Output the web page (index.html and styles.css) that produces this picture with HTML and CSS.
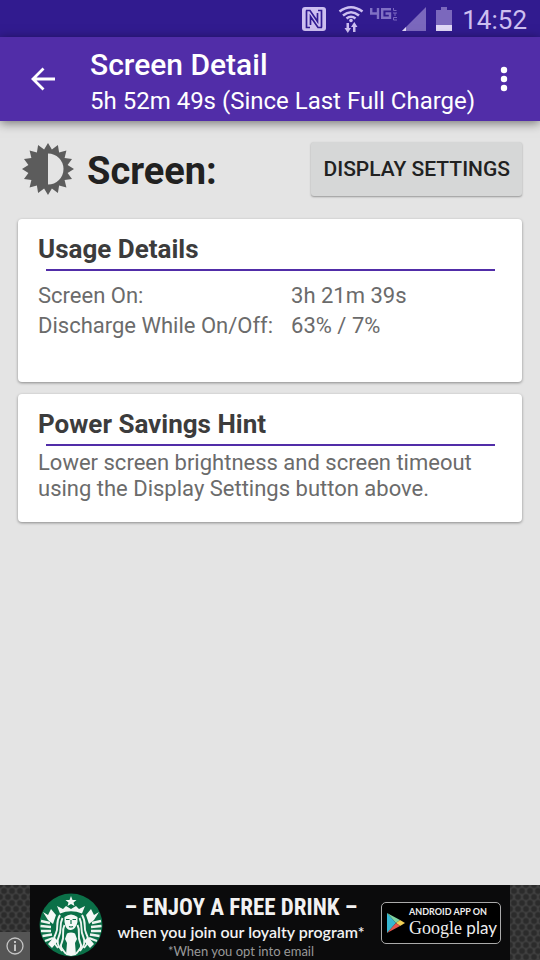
FILE: index.html
```html
<!DOCTYPE html>
<html lang="en">
<head>
<meta charset="utf-8">
<meta name="viewport" content="width=device-width, initial-scale=1">
<title>Screen Detail</title>
<link rel="stylesheet" href="styles.css">
</head>
<body>
<div class="status">
  <svg width="24" height="24" viewBox="0 0 24 24" aria-label="NFC"><rect width="24" height="24" rx="3" fill="#cdbff0"/><path d="M4 3.500H8L15.500 14.500V6M20 20.500H16L8.500 9.500V18M4.500 3.500V20.500H8M19.500 20.500V3.500H16" fill="none" stroke="#311b92" stroke-width="1.700"/></svg>
  <svg class="wifi" width="26" height="28" viewBox="0 0 26 28" aria-label="Wi-Fi"><g fill="none" stroke="#cdbff0" stroke-width="2.600"><path d="M1.500 6.500Q13-2 24.500 6.500M5 10.500Q13 4 21 10.500M8.500 13.500Q13 10 17.500 13.500"/></g><circle cx="13" cy="15.500" r="1.800" fill="#cdbff0"/><path d="M8.500 18h2.500v5h2l-3.200 5-3.300-5h2zM15 27h2.500v-5h2l-3.200-5-3.300 5h2z" fill="#cdbff0"/></svg>
  <svg class="lte" width="28" height="14" viewBox="0 0 28 14" aria-label="4G LTE"><path d="M1.200 1V6.500H9M8 1V12M21 2.200H12.200V10.800H20V6.500H15.500" fill="none" stroke="#8070c4" stroke-width="2.400"/><path d="M23.500 1v2.500h3M23 6h4M25 6v3M27 10.500h-3.500v2.500h3.500" fill="none" stroke="#7a66c0"/></svg>
  <svg width="24" height="24" viewBox="0 0 24 24" aria-label="Signal"><path d="M24 0V24H0Z" fill="#7b68bd"/><path d="M4 20V24H0Z" fill="#e0d8f5"/></svg>
  <svg class="battery" width="16" height="24" viewBox="0 0 16 24" aria-label="Battery"><path d="M5 0h6v3h5v21H0V3h5z" fill="#7b68bd"/><path d="M0 18h16v6H0z" fill="#e0d8f5"/></svg>
  <time>14:52</time>
</div>
<header class="bar">
  <button class="icon-button" type="button" aria-label="Back"><svg width="26" height="24" viewBox="0 0 26 24"><path d="M25 12H3M13.500 1.500 3 12 13.500 22.500" fill="none" stroke="#fff" stroke-width="2.800"/></svg></button>
  <div class="titles"><h1>Screen Detail</h1><p>5h 52m 49s (Since Last Full Charge)</p></div>
  <button class="icon-button" type="button" aria-label="More options"><svg width="8" height="26" viewBox="0 0 8 26" fill="#fff"><circle cx="4" cy="4" r="3.200"/><circle cx="4" cy="13" r="3.200"/><circle cx="4" cy="22" r="3.200"/></svg></button>
</header>
<main>
  <div class="heading">
    <svg width="52" height="52" viewBox="-26 -26 52 52" aria-hidden="true"><path fill="#5c5c5c" d="M0-26 3.900-19.600 9.900-24 11.100-16.600 18.400-18.400 16.600-11.100 24-9.900 19.600-3.900 26 0 19.600 3.900 24 9.900 16.600 11.100 18.400 18.400 11.100 16.600 9.900 24 3.900 19.600 0 26-3.900 19.600-9.900 24-11.100 16.600-18.400 18.400-16.600 11.100-24 9.900-19.600 3.900-26 0-19.600-3.900-24-9.900-16.600-11.100-18.400-18.400-11.100-16.600-9.900-24-3.900-19.600Z"/><path fill="#e4e4e4" d="M0-15.500A15.500 15.500 0 0 1 0 15.500Z"/></svg>
    <h2>Screen:</h2>
    <button class="settings" type="button">DISPLAY SETTINGS</button>
  </div>
  <section class="card usage">
    <h3>Usage Details</h3>
    <dl><dt>Screen On:</dt><dd>3h 21m 39s</dd><dt>Discharge While On/Off:</dt><dd>63% / 7%</dd></dl>
  </section>
  <section class="card hint">
    <h3>Power Savings Hint</h3>
    <p>Lower screen brightness and screen timeout using the Display Settings button above.</p>
  </section>
</main>
<footer class="ad">
  <div class="edge"><span class="info"><svg width="18" height="18" viewBox="0 0 18 18" aria-label="Ad information"><circle cx="9" cy="9" r="8" fill="none" stroke="#c4c4c4" stroke-width="1.300"/><path d="M9 7.500V14M9 4v2" stroke="#c4c4c4" stroke-width="2"/></svg></span></div>
  <div class="banner">
    <svg class="siren" width="64" height="64" viewBox="0 0 64 64" aria-label="Starbucks"><circle cx="32" cy="32" r="31.500" fill="#0b7048"/>
      <g fill="none" stroke="#eef5f0" stroke-width="1.900"><path d="M21 22C16 30 20 34 17 40S14 49 19 55M23.500 25C20 32 23 37 20 43S19 53 23 58M25.500 32C22 39 26 43 23 49S24 56 27 61M43 22C48 30 44 34 47 40S50 49 45 55M40.500 25C44 32 41 37 44 43S45 53 41 58M38.500 32C42 39 38 43 41 49S40 56 37 61"/><path d="M2 28 11 30M1.500 33 12 34M2 38 12 38M3.500 43 13 41.500M6 48 14 45M62 28 53 30M62.500 33 52 34M62 38 52 38M60.500 43 51 41.500M58 48 50 45" stroke-width="2.400"/></g>
      <path fill="#f5f8f6" d="M32 3 33.500 7 37.500 7 34.500 9.500 35.500 13 32 11 28.500 13 29.500 9.500 26.500 7 30.500 7ZM18 13 24 16 27 13 32 16 37 13 40 16 46 13 43 20.500Q32 16 21 20.500ZM25.500 24Q32 19 38.500 24V29Q37 36 32 37T25.500 29ZM4 19 9 22 12 16 17 22 14 31 9 27ZM60 19 55 22 52 16 47 22 50 31 55 27ZM28 40.500Q32 38.500 36 40.500L38 46 36 50 37 62 32 63 27 62 28 50 26 46ZM9 51 15 44 19 48 13 55ZM55 51 49 44 45 48 51 55Z"/>
      <path d="M27 26.500h3.500M33.500 26.500H37M32 27v4M30 33.500q2 1 4 0" fill="none" stroke="#0b7048" stroke-width="1.200"/>
    </svg>
    <div class="copy"><strong>– ENJOY A FREE DRINK –</strong><span>when you join our loyalty program*</span><small>*When you opt into email</small></div>
    <a class="store" href="#"><svg width="18" height="20" viewBox="0 0 18 20" aria-hidden="true"><path d="M0 0V20L9 10Z" fill="#36b7d2"/><path d="M0 0 13 7 9 10Z" fill="#7fd3a0"/><path d="M13 7 18 10 13 13 9 10Z" fill="#f2cf55"/><path d="M0 20 13 13 9 10Z" fill="#e4574e"/></svg><span class="store-text"><small>ANDROID APP ON</small><span class="play"><b>Google</b> play</span></span></a>
  </div>
  <div class="edge"></div>
</footer>
</body>
</html>
```
FILE: styles.css
```css
* { box-sizing: border-box; }
body { margin: 0; min-height: 100vh; display: flex; flex-direction: column; background: #e4e4e4; font-family: Roboto, sans-serif; color: #6b6b6b; }
h1, h2, h3, p, dl, dd { margin: 0; }
button { font-family: inherit; border: 0; }
svg { display: block; flex: none; }
.status { height: 37px; padding: 0 13px; display: flex; align-items: center; justify-content: flex-end; background: #311b8f; color: #cdbff0; }
.status .wifi { margin: 0 6px 0 12px; }
.status .lte { margin: 0 4px 10px 0; }
.status .battery { margin: 0 10px; }
.status time { font-size: 26px; line-height: 36px; padding-top: 3px; }
.bar { min-height: 84px; padding: 0 22px 0 20px; display: flex; align-items: center; background: #512da8; color: #fff; box-shadow: 0 2px 10px rgba(0, 0, 0, .5); }
.icon-button { padding: 10px; background: none; }
.titles { flex: 1; margin-left: 24px; padding-top: 8px; }
.titles h1 { font-size: 30px; line-height: 36px; font-weight: 500; }
.titles p { font-size: 24px; line-height: 36px; white-space: nowrap; }
main { flex: 1; padding: 20px 18px; }
.heading { display: flex; align-items: center; padding-left: 4px; margin-bottom: 22px; }
.heading h2 { margin-left: 13px; padding-top: 4px; font-size: 38px; line-height: 52px; font-weight: 700; color: #212121; }
.settings { margin-left: auto; height: 54px; padding: 0 12px; border-radius: 3px; background: #d6d7d7; color: #212121; font-size: 21px; font-weight: 500; box-shadow: 0 1px 2px rgba(0, 0, 0, .35); }
.card { background: #fff; border-radius: 4px; padding: 12px 20px; box-shadow: 0 1px 3px rgba(0, 0, 0, .4); font-size: 22px; }
.card h3 { font-size: 26px; line-height: 36px; font-weight: 700; color: #3c3c3c; }
.card h3::after { content: ""; display: block; height: 2px; margin: 2px 7px 0 8px; background: #512da8; }
.usage { padding-bottom: 41px; margin-bottom: 12px; }
.usage dl { display: grid; grid-template-columns: auto 1fr; column-gap: 18px; line-height: 30px; padding-top: 10px; }
.hint p { line-height: 26px; padding: 4px 0 8px; }
.ad { display: flex; height: 75px; background: #060606; }
.edge { flex: 1; min-width: 30px; display: flex; align-items: flex-end; background-color: #424242; background-image: radial-gradient(circle, #2b2b2b 2px, transparent 4px), radial-gradient(circle, #2b2b2b 2px, transparent 4px); background-size: 8px 12px; background-position: 0 0, 4px 6px; }
.info { width: 30px; height: 28px; padding: 5px 6px; background: #555; }
.banner { width: 480px; display: flex; align-items: center; padding: 0 9px; background: #0b0b0c; color: #f2f2f2; }
.siren { margin-top: 4px; }
.copy { flex: 1; padding: 8px 2px 0 0; display: flex; flex-direction: column; align-items: center; white-space: nowrap; font-family: Lato, sans-serif; }
.copy strong { font-family: "Liberation Sans Narrow", "Roboto Condensed", Roboto, sans-serif; font-size: 23px; line-height: 28px; }
.copy span { font-size: 16px; line-height: 20px; font-weight: 600; }
.copy small { font-size: 13px; line-height: 18px; color: #999; }
.store { display: flex; align-items: center; gap: 4px; height: 42px; width: 120px; padding: 0 5px; border: 1px solid #aaa; border-radius: 5px; background: #000; color: #eee; text-decoration: none; }
.store-text { display: flex; flex-direction: column; white-space: nowrap; }
.store small { font: 700 9px/11px Lato, sans-serif; }
.play { font: 17px/22px Lato, sans-serif; }
.play b { font-family: "Liberation Serif", serif; font-weight: 400; font-size: 18px; }
```
